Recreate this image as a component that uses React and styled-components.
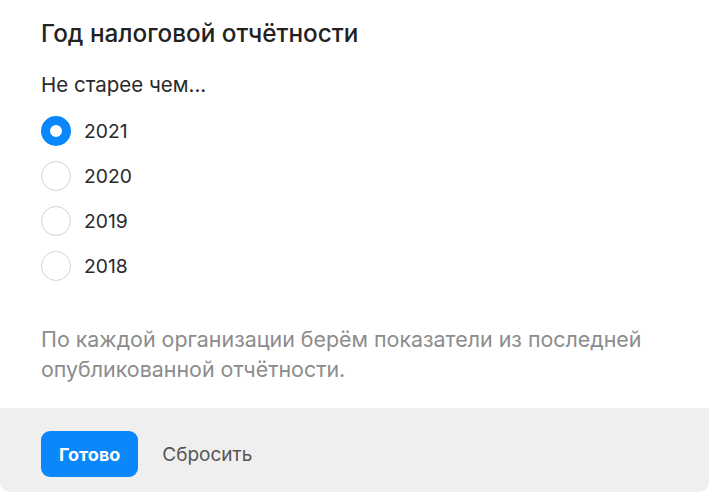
import React, { useState } from "react";
import styled, { createGlobalStyle } from "styled-components";

const GlobalStyle = createGlobalStyle`
  html, body {
    margin: 0;
    padding: 0;
    background: #ffffff;
  }
  body {
    font-family: Inter, Roboto, "Noto Sans", sans-serif;
    color: #222222;
  }
`;

const Card = styled.div`
  width: 709px;
  height: 492px;
  display: flex;
  flex-direction: column;
  background: #ffffff;
  border-radius: 0 0 10px 10px;
  overflow: hidden;
`;

const Body = styled.div`
  flex: 1;
  padding: 19px 41px 0;
  display: flex;
  flex-direction: column;
`;

const Title = styled.h2`
  margin: 0;
  font-size: 24.3px;
  font-weight: 500;
  line-height: 28px;
  color: #222222;
`;

const Subtitle = styled.div`
  margin-top: 26px;
  font-size: 20.5px;
  line-height: 24px;
  color: #2a2a2a;
`;

const RadioList = styled.div`
  margin-top: 19px;
  display: flex;
  flex-direction: column;
  gap: 15px;
`;

const RadioRow = styled.label`
  display: flex;
  align-items: center;
  gap: 13px;
  height: 30px;
  cursor: pointer;
  font-size: 19.3px;
  color: #2a2a2a;
`;

const RadioCircle = styled.span`
  box-sizing: border-box;
  width: 30px;
  height: 30px;
  border-radius: 50%;
  flex-shrink: 0;
  border: ${(p) => (p.$checked ? "9px solid #0a87fb" : "1.5px solid #d2d2d2")};
  background: #ffffff;
`;

const Note = styled.p`
  margin: 43px 0 0;
  font-size: 21.4px;
  line-height: 30px;
  color: #8c8c8c;
`;

const Footer = styled.div`
  height: 84px;
  box-sizing: border-box;
  flex-shrink: 0;
  background: #efefef;
  display: flex;
  align-items: flex-start;
  gap: 24px;
  padding: 23px 41px 0;
`;

const PrimaryButton = styled.button`
  height: 46px;
  padding: 0 18px;
  border: none;
  border-radius: 9px;
  background: #0a87fb;
  color: #ffffff;
  font-family: inherit;
  font-size: 18px;
  font-weight: 700;
  cursor: pointer;
`;

const LinkButton = styled.button`
  height: 46px;
  border: none;
  background: none;
  padding: 0;
  font-family: inherit;
  font-size: 19px;
  color: #555555;
  cursor: pointer;
`;

const years = ["2021", "2020", "2019", "2018"];

export default function App() {
  const [year, setYear] = useState("2021");
  return (
    <>
      <GlobalStyle />
      <Card>
        <Body>
          <Title>Год налоговой отчётности</Title>
          <Subtitle>Не старее чем...</Subtitle>
          <RadioList>
            {years.map((y) => (
              <RadioRow key={y} onClick={() => setYear(y)}>
                <RadioCircle $checked={year === y} />
                {y}
              </RadioRow>
            ))}
          </RadioList>
          <Note>
            По каждой организации берём показатели из последней
            <br />
            опубликованной отчётности.
          </Note>
        </Body>
        <Footer>
          <PrimaryButton>Готово</PrimaryButton>
          <LinkButton onClick={() => setYear("2021")}>Сбросить</LinkButton>
        </Footer>
      </Card>
    </>
  );
}
